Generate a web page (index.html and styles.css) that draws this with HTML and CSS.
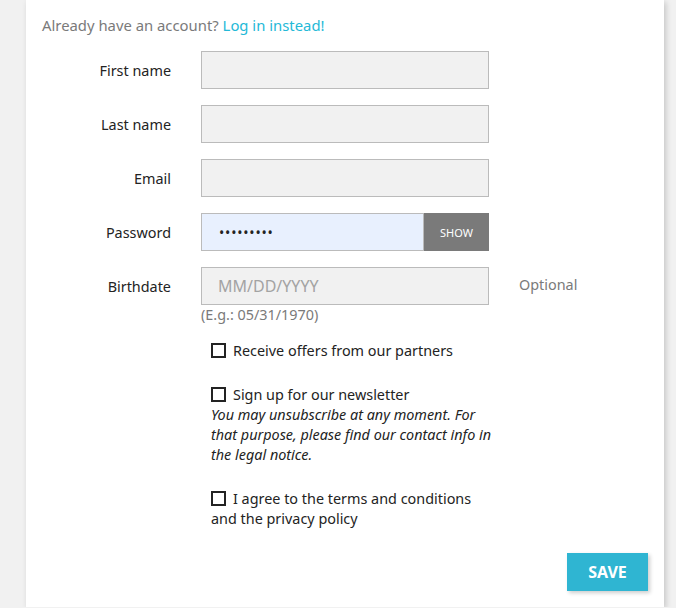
FILE: index.html
```html
<!DOCTYPE html>
<html>
<head>
<meta charset="utf-8">
<link rel="stylesheet" href="styles.css">
</head>
<body>
<div class="card">
  <p class="intro">Already have an account? <a href="#" class="link">Log in instead!</a></p>
  <form class="form">
    <div class="row">
      <label class="label">First name</label>
      <input class="field" type="text">
    </div>
    <div class="row">
      <label class="label">Last name</label>
      <input class="field" type="text">
    </div>
    <div class="row">
      <label class="label">Email</label>
      <input class="field" type="email">
    </div>
    <div class="row">
      <label class="label">Password</label>
      <div class="pw">
        <input class="field pw-field" type="password" value="123456789">
        <button type="button" class="show">SHOW</button>
      </div>
    </div>
    <div class="row row-birth">
      <label class="label">Birthdate</label>
      <div class="birth">
        <input class="field" type="text" placeholder="MM/DD/YYYY">
        <span class="hint">(E.g.: 05/31/1970)</span>
      </div>
      <span class="optional">Optional</span>
    </div>
    <div class="checks">
      <label class="check"><span class="box"></span>Receive offers from our partners</label>
      <div class="check-group">
        <label class="check"><span class="box"></span>Sign up for our newsletter</label>
        <em class="note">You may unsubscribe at any moment. For that purpose, please find our contact info in the legal notice.</em>
      </div>
      <label class="check"><span class="box"></span>I agree to the terms and conditions and the privacy policy</label>
    </div>
    <div class="actions">
      <button type="button" class="save">SAVE</button>
    </div>
  </form>
</div>
</body>
</html>
```

FILE: styles.css
```css
html, body {
  margin: 0;
  padding: 0;
  background: #f1f1f1;
  font-family: "Noto Sans", "Open Sans", sans-serif;
  color: #232323;
}
.card {
  margin-left: 26px;
  width: 638px;
  min-height: 607px;
  box-sizing: border-box;
  background: #fff;
  box-shadow: 2px 2px 6px rgba(0,0,0,0.18);
  padding: 14px 16px 16px;
}
.intro {
  margin: 0 0 15px;
  font-size: 14.85px;
  line-height: 22px;
  color: #7a7a7a;
}
.link {
  color: #24b9d7;
  text-decoration: none;
}
.form {
  display: flex;
  flex-direction: column;
}
.row {
  display: grid;
  grid-template-columns: 129px 288px 1fr;
  column-gap: 30px;
  align-items: center;
  margin-bottom: 16px;
}
.row-birth {
  align-items: start;
}
.label {
  text-align: right;
  font-size: 14.4px;
  line-height: 38px;
  padding-top: 1px;
  margin-bottom: -1px;
  color: #232323;
}
.field {
  display: block;
  width: 288px;
  height: 38px;
  box-sizing: border-box;
  margin: 0;
  border: 1px solid #bbbbbb;
  background: #f1f1f1;
  padding: 0 16px;
  font-family: "Noto Sans", sans-serif;
  font-size: 16px;
  color: #232323;
  outline: none;
}
.field::placeholder {
  color: #a3a3a3;
}
.pw {
  display: flex;
}
.pw-field {
  width: 223px;
  background: #e8f0fe;
  font-size: 14px;
  letter-spacing: 0.8px;
  padding-left: 17px;
}
.show {
  width: 65px;
  height: 38px;
  border: none;
  margin: 0;
  background: #7a7a7a;
  color: #fff;
  font-family: "Noto Sans", sans-serif;
  font-size: 11px;
}
.birth {
  display: flex;
  flex-direction: column;
}
.hint {
  font-size: 14.4px;
  line-height: 20px;
  color: #7a7a7a;
}
.optional {
  font-size: 14.4px;
  line-height: 36px;
  color: #7a7a7a;
}
.checks {
  margin-left: 169px;
  width: 284px;
  display: flex;
  flex-direction: column;
  gap: 24px;
}
.check-group {
  display: flex;
  flex-direction: column;
}
.check {
  font-size: 14.4px;
  line-height: 20px;
  color: #232323;
}
.box {
  display: inline-block;
  width: 15px;
  height: 15px;
  box-sizing: border-box;
  border: 2px solid #232323;
  margin-right: 7px;
  vertical-align: -2px;
}
.note {
  font-size: 14.4px;
  line-height: 20px;
  color: #232323;
}
.actions {
  display: flex;
  justify-content: flex-end;
  margin-top: 24px;
}
.save {
  width: 81px;
  height: 38px;
  border: none;
  background: #2fb5d2;
  color: #fff;
  font-family: "Noto Sans", sans-serif;
  font-weight: bold;
  font-size: 16px;
  box-shadow: 2px 2px 4px rgba(0,0,0,0.2);
}
```
